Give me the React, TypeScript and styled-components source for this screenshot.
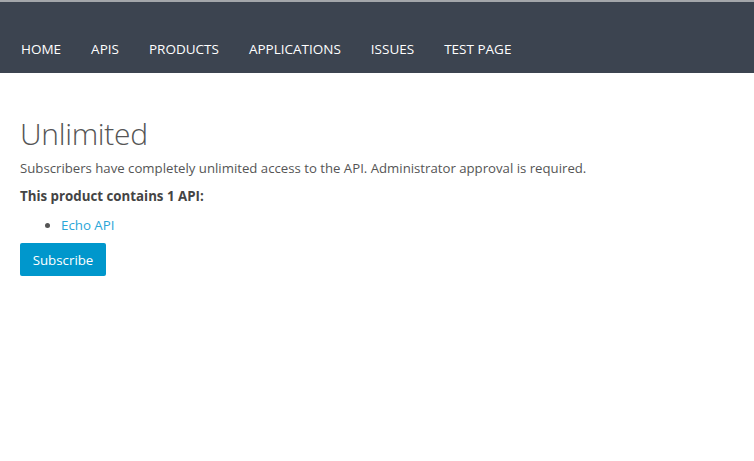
import styled, { createGlobalStyle } from "styled-components";

const GlobalStyle = createGlobalStyle`
  html, body {
    margin: 0;
    padding: 0;
    background: #ffffff;
  }
  body {
    font-family: "Open Sans", "Noto Sans", sans-serif;
    color: #555555;
  }
`;

const Page = styled.div`
  width: 754px;
  min-height: 461px;
  background: #ffffff;
`;

const NavBar = styled.nav`
  height: 73px;
  box-sizing: border-box;
  background: #3c4450;
  border-top: 2px solid #a3a6aa;
  display: flex;
  align-items: flex-end;
  padding: 0 0 15px 21px;
  gap: 30px;
`;

const NavLink = styled.a`
  color: #ffffff;
  font-size: 13.5px;
  text-decoration: none;
  text-transform: uppercase;
  line-height: 18px;
`;

const Content = styled.main`
  padding: 43px 20px 0 20px;
  display: flex;
  flex-direction: column;
  align-items: flex-start;
`;

const Title = styled.h1`
  margin: 0;
  font-size: 30px;
  font-weight: 300;
  color: #555555;
  line-height: 36px;
  letter-spacing: -0.3px;
`;

const Description = styled.p`
  margin: 7px 0 0 0;
  font-size: 13.2px;
  line-height: 18px;
  color: #555555;
`;

const SectionLabel = styled.p`
  margin: 10px 0 0 0;
  font-size: 13.3px;
  font-weight: 700;
  line-height: 18px;
  color: #444444;
`;

const ApiList = styled.ul`
  margin: 11px 0 0 0;
  padding-left: 41px;
  font-size: 13.3px;
  line-height: 18px;
  color: #555555;
`;

const ApiLink = styled.a`
  color: #2aa6d8;
  text-decoration: none;
`;

const SubscribeButton = styled.button`
  margin-top: 9px;
  height: 33px;
  width: 86px;
  border: none;
  border-radius: 2px;
  background: #0097cc;
  color: #ffffff;
  font-family: "Open Sans", "Noto Sans", sans-serif;
  font-size: 13.3px;
  cursor: pointer;
`;

const navItems = ["Home", "APIs", "Products", "Applications", "Issues", "Test page"];

export default function App() {
  return (
    <Page>
      <GlobalStyle />
      <NavBar>
        {navItems.map((item) => (
          <NavLink key={item} href="#">
            {item}
          </NavLink>
        ))}
      </NavBar>
      <Content>
        <Title>Unlimited</Title>
        <Description>
          Subscribers have completely unlimited access to the API. Administrator approval is required.
        </Description>
        <SectionLabel>This product contains 1 API:</SectionLabel>
        <ApiList>
          <li>
            <ApiLink href="#">Echo API</ApiLink>
          </li>
        </ApiList>
        <SubscribeButton>Subscribe</SubscribeButton>
      </Content>
    </Page>
  );
}
